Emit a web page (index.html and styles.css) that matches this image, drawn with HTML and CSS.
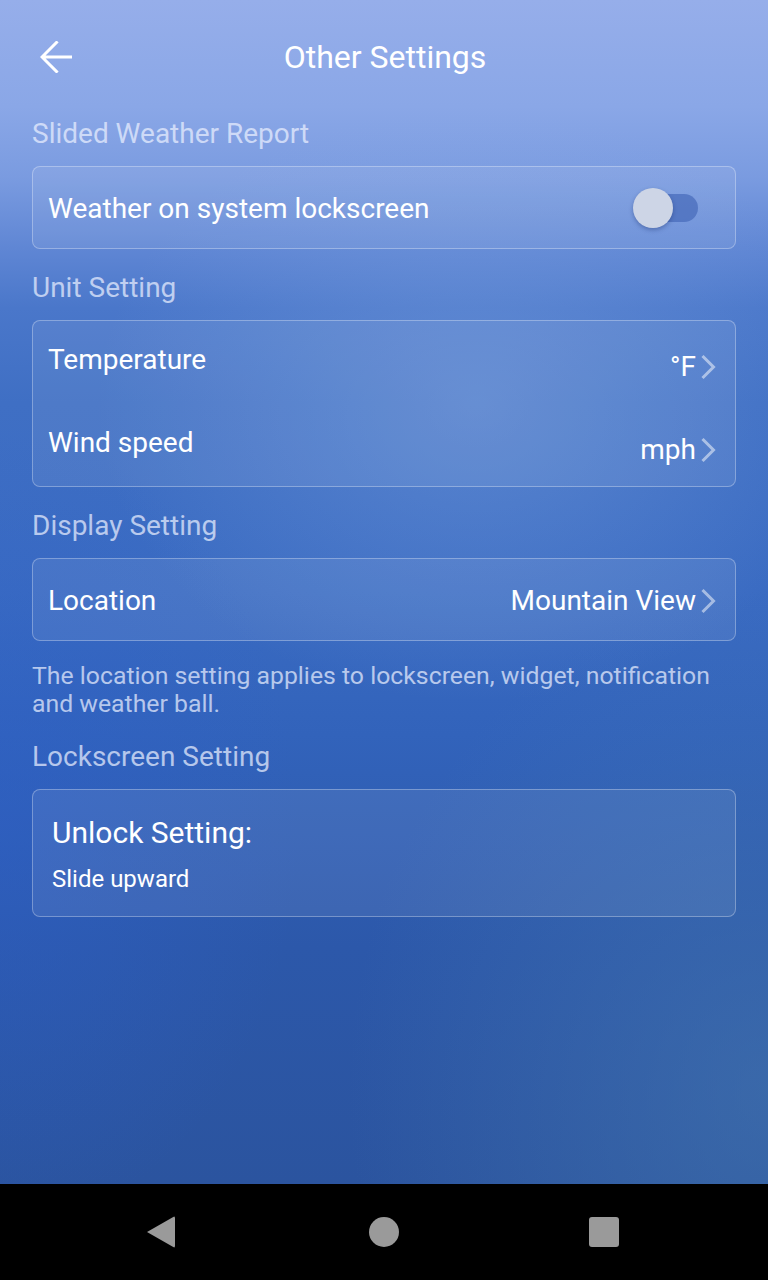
FILE: index.html
```html
<!DOCTYPE html>
<html lang="en">
<head>
<meta charset="utf-8">
<title>Other Settings</title>
<link rel="stylesheet" href="styles.css">
</head>
<body>
<div class="screen">
  <div class="app">
    <header class="header">
      <button class="back" aria-label="Back">
        <svg width="32" height="32" viewBox="0 0 32 32"><path d="M31 16H3M16.5 1.5L2 16l14.5 14.5" fill="none" stroke="#fff" stroke-width="3" stroke-linecap="square"/></svg>
      </button>
      <h1 class="title">Other Settings</h1>
    </header>

    <main class="content">
      <div class="section-label">Slided Weather Report</div>
      <div class="card">
        <div class="row row-single">
          <span class="row-label">Weather on system lockscreen</span>
          <span class="toggle"><span class="toggle-track"></span><span class="toggle-thumb"></span></span>
        </div>
      </div>

      <div class="section-label">Unit Setting</div>
      <div class="card">
        <div class="row row-unit">
          <span class="row-label lift">Temperature</span>
          <span class="row-value drop">°F<svg class="chev" width="16" height="26" viewBox="0 0 16 26"><path d="M2.5 2l11 11-11 11" fill="none" stroke="rgba(255,255,255,0.5)" stroke-width="3"/></svg></span>
        </div>
        <div class="row row-unit">
          <span class="row-label lift">Wind speed</span>
          <span class="row-value drop">mph<svg class="chev" width="16" height="26" viewBox="0 0 16 26"><path d="M2.5 2l11 11-11 11" fill="none" stroke="rgba(255,255,255,0.5)" stroke-width="3"/></svg></span>
        </div>
      </div>

      <div class="section-label">Display Setting</div>
      <div class="card">
        <div class="row row-single">
          <span class="row-label">Location</span>
          <span class="row-value">Mountain View<svg class="chev" width="16" height="26" viewBox="0 0 16 26"><path d="M2.5 2l11 11-11 11" fill="none" stroke="rgba(255,255,255,0.5)" stroke-width="3"/></svg></span>
        </div>
      </div>
      <p class="note">The location setting applies to lockscreen, widget, notification and weather ball.</p>

      <div class="section-label">Lockscreen Setting</div>
      <div class="card card-unlock">
        <div class="unlock-title">Unlock Setting:</div>
        <div class="unlock-value">Slide upward</div>
      </div>
    </main>
  </div>

  <nav class="navbar">
    <span class="nav-back"></span>
    <span class="nav-home"></span>
    <span class="nav-recent"></span>
  </nav>
</div>
</body>
</html>
```

FILE: styles.css
```css
* { box-sizing: border-box; }
html, body { margin: 0; padding: 0; }
body {
  width: 768px;
  height: 1280px;
  font-family: Roboto, "Noto Sans", sans-serif;
  color: #fff;
  overflow: hidden;
}
.screen {
  width: 768px;
  height: 1280px;
  display: flex;
  flex-direction: column;
}
.app {
  height: 1184px;
  background:
    radial-gradient(ellipse 380px 300px at 62% 34%, rgba(140, 175, 230, 0.35), rgba(140, 175, 230, 0) 100%),
    radial-gradient(ellipse 420px 500px at 100% 92%, rgba(70, 120, 175, 0.55), rgba(70, 120, 175, 0) 100%),
    radial-gradient(ellipse 300px 400px at 0% 70%, rgba(45, 95, 200, 0.5), rgba(45, 95, 200, 0) 100%),
    linear-gradient(180deg, #96aeea 0%, #8aa7e7 9%, #7a9be0 15%, #5f86d4 21%, #4a77ca 26%, #3f6fc4 34%, #3a6bc2 50%, #3263bb 62%, #2c58aa 80%, #2b549f 100%);
  display: flex;
  flex-direction: column;
}
.header {
  height: 95px;
  padding-top: 19px;
  display: flex;
  align-items: center;
  justify-content: center;
  position: relative;
}
.back {
  position: absolute;
  left: 40px;
  top: 41px;
  width: 32px;
  height: 32px;
  padding: 0;
  border: 0;
  background: none;
  display: block;
}
.back svg { display: block; }
.title {
  margin: 0 0 0 2px;
  font-size: 32px;
  font-weight: 400;
  line-height: 40px;
}
.content {
  padding: 0 32px;
  display: flex;
  flex-direction: column;
}
.section-label {
  padding-top: 23px;
  margin-bottom: 16px;
  font-size: 28px;
  line-height: 32px;
  color: rgba(235, 240, 255, 0.72);
}
.card {
  border: 1px solid rgba(255, 255, 255, 0.3);
  border-radius: 8px;
  background: rgba(255, 255, 255, 0.08);
}
.row {
  display: flex;
  align-items: center;
  justify-content: space-between;
  padding: 0 19px 0 15px;
}
.row-single { height: 81px; }
.row-single .row-label,
.row-single .row-value { padding-top: 3px; }
.row-unit { height: 82px; }
.row-unit:first-child { height: 83px; }
.row-label {
  font-size: 28px;
  line-height: 34px;
}
.lift { padding-bottom: 5px; }
.drop { padding-top: 9px; }
.row-value {
  display: flex;
  align-items: center;
  gap: 4px;
  font-size: 28px;
  line-height: 34px;
}
.chev { display: block; }
.toggle {
  position: relative;
  width: 65px;
  height: 40px;
  margin-right: 18px;
}
.toggle-track {
  position: absolute;
  right: 0;
  top: 6px;
  width: 56px;
  height: 28px;
  border-radius: 14px;
  background: rgba(70, 105, 185, 0.7);
}
.toggle-thumb {
  position: absolute;
  left: 0;
  top: 0;
  width: 40px;
  height: 40px;
  border-radius: 50%;
  background: #cdd5e6;
  box-shadow: 0 2px 4px rgba(20, 40, 100, 0.35);
}
.note {
  margin: 21px 0 0;
  font-size: 24.8px;
  line-height: 28px;
  color: rgba(235, 240, 255, 0.72);
}
.card-unlock {
  padding: 24px 19px 21px;
}
.unlock-title {
  font-size: 30px;
  line-height: 38px;
}
.unlock-value {
  margin-top: 11px;
  font-size: 24px;
  line-height: 32px;
}
.navbar {
  height: 96px;
  background: #000;
  display: flex;
  align-items: center;
  position: relative;
}
.nav-back, .nav-home, .nav-recent {
  position: absolute;
  top: 32px;
  background: #9a9a9a;
}
.nav-back {
  left: 147px;
  width: 28px;
  height: 32px;
  clip-path: polygon(100% 0, 100% 100%, 0 50%);
  border-radius: 2px;
}
.nav-home {
  left: 369px;
  width: 30px;
  height: 30px;
  top: 33px;
  border-radius: 50%;
}
.nav-recent {
  left: 589px;
  width: 30px;
  height: 30px;
  top: 33px;
  border-radius: 3px;
}
```
